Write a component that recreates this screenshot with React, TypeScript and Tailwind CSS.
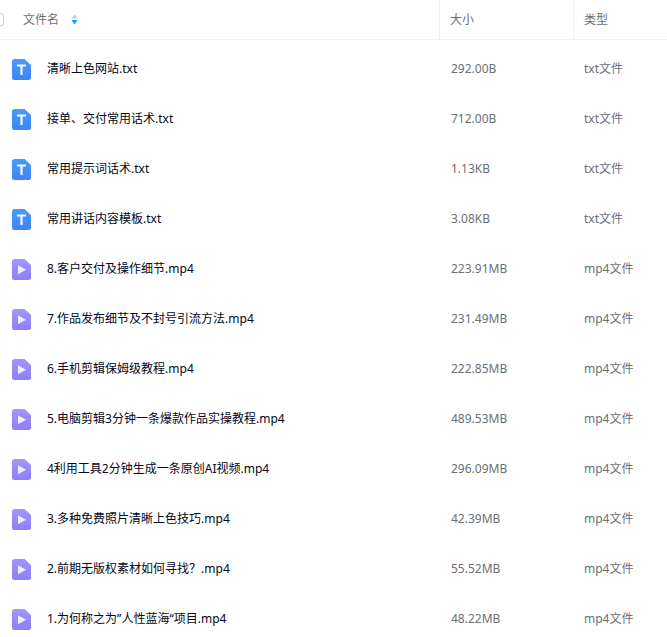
const files: [string, string, "txt" | "mp4"][] = [
  ["清晰上色网站.txt", "292.00B", "txt"],
  ["接单、交付常用话术.txt", "712.00B", "txt"],
  ["常用提示词话术.txt", "1.13KB", "txt"],
  ["常用讲话内容模板.txt", "3.08KB", "txt"],
  ["8.客户交付及操作细节.mp4", "223.91MB", "mp4"],
  ["7.作品发布细节及不封号引流方法.mp4", "231.49MB", "mp4"],
  ["6.手机剪辑保姆级教程.mp4", "222.85MB", "mp4"],
  ["5.电脑剪辑3分钟一条爆款作品实操教程.mp4", "489.53MB", "mp4"],
  ["4利用工具2分钟生成一条原创AI视频.mp4", "296.09MB", "mp4"],
  ["3.多种免费照片清晰上色技巧.mp4", "42.39MB", "mp4"],
  ["2.前期无版权素材如何寻找？.mp4", "55.52MB", "mp4"],
  ["1.为何称之为”人性蓝海“项目.mp4", "48.22MB", "mp4"],
];

function FileIcon({ kind }: { kind: "txt" | "mp4" }) {
  const id = `g-${kind}`;
  return (
    <svg width="19" height="21" viewBox="0 0 19 21" className="shrink-0">
      <defs>
        <linearGradient id={id} x1="0" y1="0" x2="0" y2="1">
          <stop offset="0" stopColor={kind === "txt" ? "#4a9bfa" : "#a396fb"} />
          <stop offset="1" stopColor={kind === "txt" ? "#3f84f6" : "#8c7ffa"} />
        </linearGradient>
      </defs>
      <path d="M2.5 0H12.5L19 6V18.5A2.5 2.5 0 0 1 16.5 21H2.5A2.5 2.5 0 0 1 0 18.5V2.5A2.5 2.5 0 0 1 2.5 0Z" fill={`url(#${id})`} />
      {kind === "txt" ? (
        <path d="M5 5.5H14V7.6H10.6V16H8.4V7.6H5Z" fill="#fff" fillOpacity="0.95" />
      ) : (
        <path d="M6 6.2L14 10.7L6 15.2Z" fill="#fff" fillOpacity="0.85" />
      )}
    </svg>
  );
}

export default function App() {
  return (
    <div className="h-[637px] w-[667px] overflow-hidden bg-white text-[12px] font-['Noto_Sans','Noto_Sans_CJK_SC',sans-serif]">
      <div className="flex h-[40px] border-b border-[#f1f2f4] text-[#6d7075]">
        <div className="flex w-[440px] items-center border-r border-[#f1f2f4]">
          <div className="ml-[-9px] h-[13px] w-[13px] rounded-[3px] border border-[#c9cbd0]" />
          <span className="ml-[19px]">文件名</span>
          <svg width="7" height="11" viewBox="0 0 7 11" className="ml-[12px]">
            <path d="M3.5 0.5L6.5 4.5H0.5Z" fill="#c8cdd3" />
            <path d="M3.5 10.5L0.5 6H6.5Z" fill="#06a7ff" />
          </svg>
        </div>
        <div className="flex w-[134px] items-center border-r border-[#f1f2f4] pl-[10px]">大小</div>
        <div className="flex flex-1 items-center pl-[10px]">类型</div>
      </div>
      <div className="pt-[4px]">
        {files.map(([name, size, kind]) => (
          <div key={name} className="flex h-[50px] items-center">
            <div className="flex w-[441px] items-center pl-[12px]">
              <FileIcon kind={kind} />
              <span className="ml-[16px] text-[#03081a]">{name}</span>
            </div>
            <div className="w-[133px] pl-[10px] text-[#6d7075]">{size}</div>
            <div className="flex-1 pl-[10px] text-[#6d7075]">{kind}文件</div>
          </div>
        ))}
      </div>
    </div>
  );
}
